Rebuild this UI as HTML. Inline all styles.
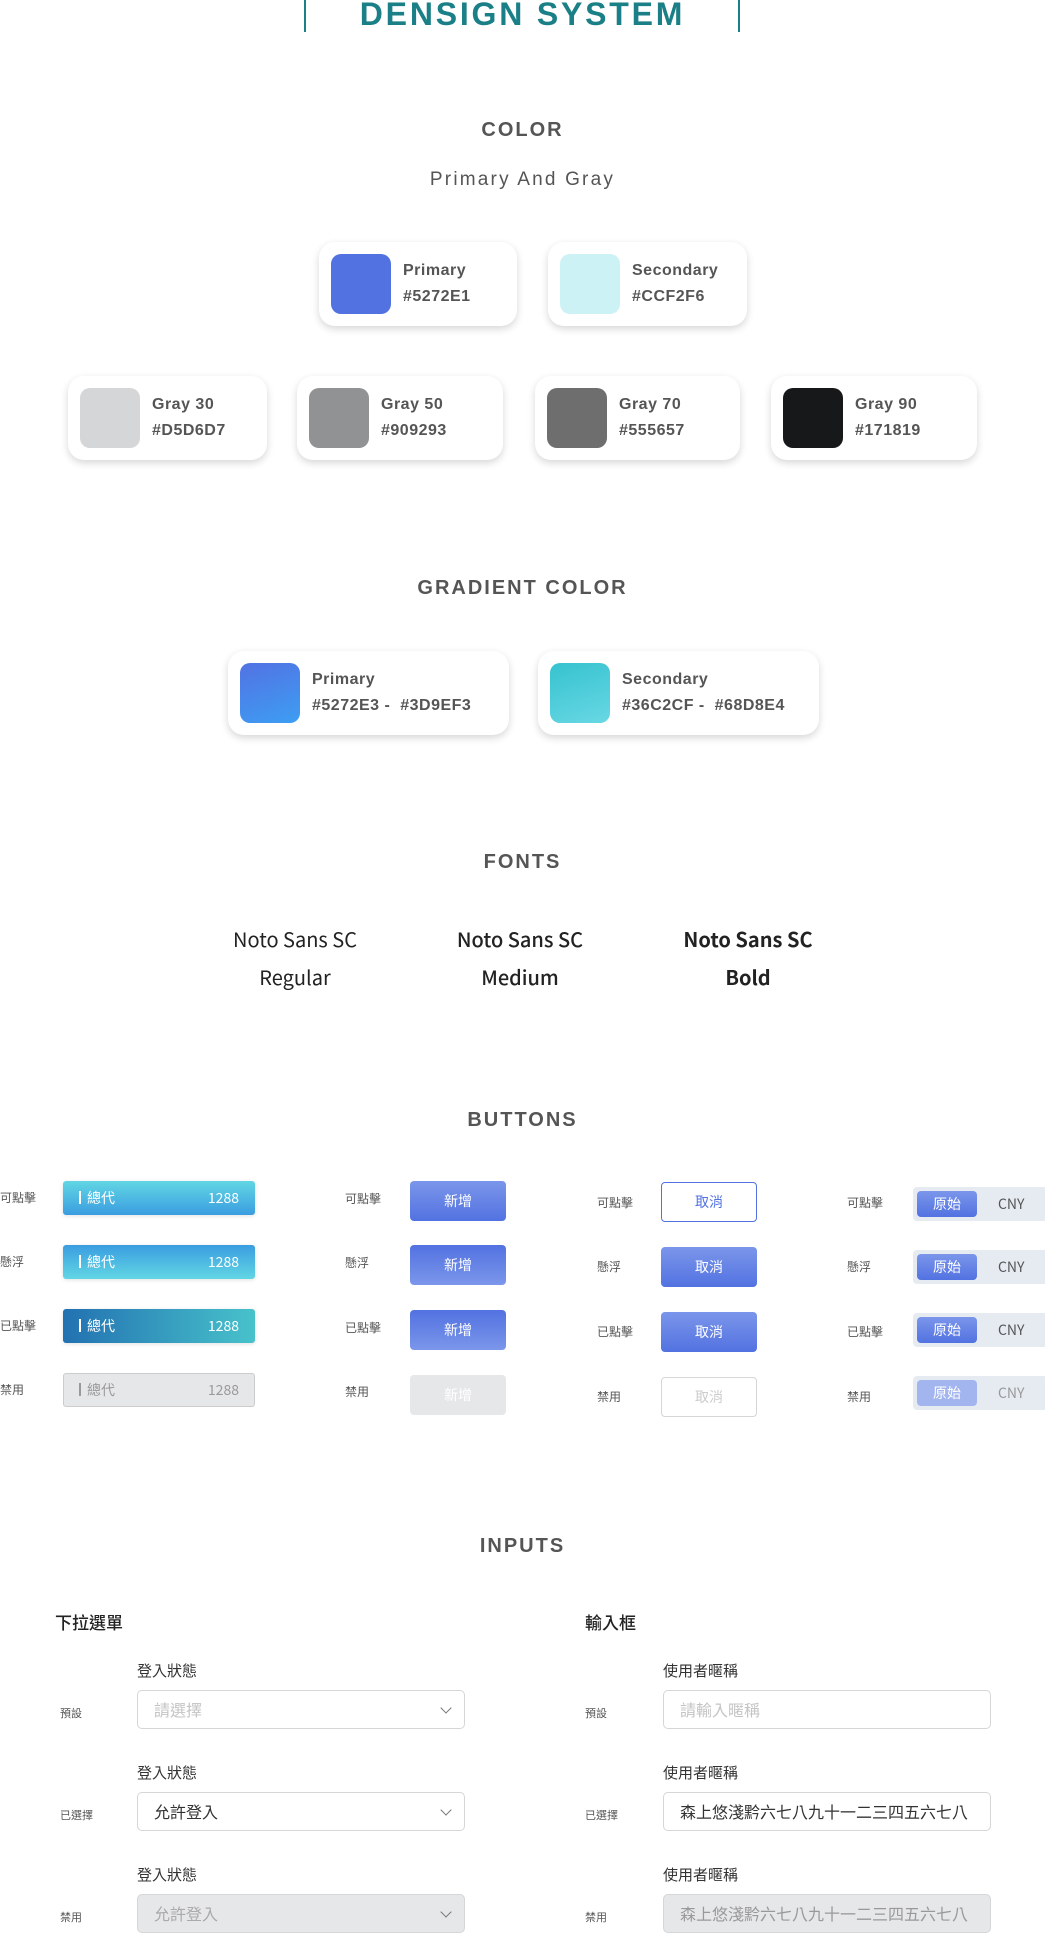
<!DOCTYPE html>
<html><head><meta charset="utf-8"><style>
*{margin:0;padding:0;box-sizing:border-box}
body{width:1045px;height:1934px;background:#fff;position:relative;overflow:hidden;font-family:"Liberation Sans","Noto Sans CJK TC",sans-serif}
.a{position:absolute}
.h{position:absolute;left:0;width:1045px;text-align:center;font-weight:bold;font-size:20px;letter-spacing:2px;color:#555;line-height:24px}
.card{position:absolute;background:#fff;border-radius:16px;box-shadow:0 3px 8px rgba(0,0,0,.16)}
.sw{position:absolute;left:12px;top:12px;width:60px;height:60px;border-radius:10px}
.ct{position:absolute;left:84px;top:16px;font-size:16px;font-weight:bold;color:#555;line-height:26px;letter-spacing:.5px;white-space:nowrap}
.f{position:absolute;width:220px;text-align:center;font-family:"Noto Sans CJK SC",sans-serif;font-size:20px;color:#222;line-height:38px}
.lb{position:absolute;font-size:12px;color:#555;font-family:"Noto Sans CJK TC",sans-serif;line-height:16px}
.bar{position:absolute;left:63px;width:192px;height:34px;border-radius:3px;color:#fff;font-size:14px;font-family:"Noto Sans CJK TC",sans-serif;box-shadow:0 1px 4px rgba(0,0,0,.12)}
.bar .t{position:absolute;left:16px;top:7px;line-height:20px}
.bar .t:before{content:"";display:inline-block;width:2px;height:13px;background:currentColor;margin-right:6px;vertical-align:-1px}
.bar .n{position:absolute;right:16px;top:7px;line-height:20px}
.btn{position:absolute;width:96px;height:40px;border-radius:4px;color:#fff;font-size:14px;text-align:center;line-height:40px;font-family:"Noto Sans CJK TC",sans-serif}
.tg{position:absolute;left:913px;width:135px;height:34px;border-radius:4px;background:#e6ebf2;font-family:"Noto Sans CJK TC",sans-serif;font-size:14px}
.tg .p{position:absolute;left:4px;top:4px;width:60px;height:26px;border-radius:4px;background:linear-gradient(#7b96ea,#5272e1);color:#fff;text-align:center;line-height:26px}
.tg .c{position:absolute;left:85px;top:0;line-height:34px;color:#555}
.il{position:absolute;font-size:15px;color:#333;font-family:"Noto Sans CJK TC",sans-serif;line-height:20px}
.box{position:absolute;width:328px;height:39px;border:1px solid #d5d6d7;border-radius:5px;font-size:16px;font-family:"Noto Sans CJK TC",sans-serif;line-height:37px;padding-left:16px;color:#333}
.chev{position:absolute;right:14px;top:13px;width:8px;height:8px;border-right:1.3px solid #777;border-bottom:1.3px solid #777;transform:rotate(45deg)}
</style></head><body>
<div class="a" style="left:304px;top:0;width:2px;height:32px;background:#1a7f86"></div>
<div class="a" style="left:738px;top:0;width:2px;height:32px;background:#1a7f86"></div>
<div class="a" style="left:0;width:1045px;top:-4px;text-align:center;font-size:32px;font-weight:bold;color:#1a7f86;letter-spacing:2.8px;line-height:36px">DENSIGN SYSTEM</div>

<div class="h" style="top:118px">COLOR</div>
<div class="a" style="left:0;width:1045px;top:168px;text-align:center;font-size:19px;color:#555;letter-spacing:2.2px;line-height:24px">Primary And Gray</div>

<div class="card" style="left:319px;top:242px;width:198px;height:84px"><div class="sw" style="background:#5272e1"></div><div class="ct">Primary<br>#5272E1</div></div>
<div class="card" style="left:548px;top:242px;width:199px;height:84px"><div class="sw" style="background:#ccf2f6"></div><div class="ct">Secondary<br>#CCF2F6</div></div>

<div class="card" style="left:68px;top:376px;width:199px;height:84px"><div class="sw" style="background:#d5d6d7"></div><div class="ct">Gray 30<br>#D5D6D7</div></div>
<div class="card" style="left:297px;top:376px;width:206px;height:84px"><div class="sw" style="background:#909293"></div><div class="ct">Gray 50<br>#909293</div></div>
<div class="card" style="left:535px;top:376px;width:205px;height:84px"><div class="sw" style="background:#6e6e6e"></div><div class="ct">Gray 70<br>#555657</div></div>
<div class="card" style="left:771px;top:376px;width:206px;height:84px"><div class="sw" style="background:#171819"></div><div class="ct">Gray 90<br>#171819</div></div>

<div class="h" style="top:576px">GRADIENT COLOR</div>
<div class="card" style="left:228px;top:651px;width:281px;height:84px"><div class="sw" style="background:linear-gradient(160deg,#5272e3,#3d9ef3)"></div><div class="ct">Primary<br>#5272E3 -&nbsp; #3D9EF3</div></div>
<div class="card" style="left:538px;top:651px;width:281px;height:84px"><div class="sw" style="background:linear-gradient(160deg,#36c2cf,#68d8e4)"></div><div class="ct">Secondary<br>#36C2CF -&nbsp; #68D8E4</div></div>

<div class="h" style="top:850px">FONTS</div>
<div class="f" style="left:185px;top:920px;font-weight:400">Noto Sans SC<br>Regular</div>
<div class="f" style="left:410px;top:920px;font-weight:500">Noto Sans SC<br>Medium</div>
<div class="f" style="left:638px;top:920px;font-weight:700">Noto Sans SC<br>Bold</div>

<div class="h" style="top:1108px">BUTTONS</div>

<div class="lb" style="left:0;top:1190px">可點擊</div>
<div class="lb" style="left:0;top:1254px">懸浮</div>
<div class="lb" style="left:0;top:1318px">已點擊</div>
<div class="lb" style="left:0;top:1382px">禁用</div>
<div class="lb" style="left:345px;top:1191px">可點擊</div>
<div class="lb" style="left:345px;top:1255px">懸浮</div>
<div class="lb" style="left:345px;top:1320px">已點擊</div>
<div class="lb" style="left:345px;top:1384px">禁用</div>
<div class="lb" style="left:597px;top:1195px">可點擊</div>
<div class="lb" style="left:597px;top:1259px">懸浮</div>
<div class="lb" style="left:597px;top:1324px">已點擊</div>
<div class="lb" style="left:597px;top:1389px">禁用</div>
<div class="lb" style="left:847px;top:1195px">可點擊</div>
<div class="lb" style="left:847px;top:1259px">懸浮</div>
<div class="lb" style="left:847px;top:1324px">已點擊</div>
<div class="lb" style="left:847px;top:1389px">禁用</div>

<div class="bar" style="top:1181px;background:linear-gradient(#62d6e4,#3a9de0)"><span class="t">總代</span><span class="n">1288</span></div>
<div class="bar" style="top:1245px;background:linear-gradient(#3a9de0,#62d6e4)"><span class="t">總代</span><span class="n">1288</span></div>
<div class="bar" style="top:1309px;background:linear-gradient(90deg,#2271b1,#48c2cb)"><span class="t">總代</span><span class="n">1288</span></div>
<div class="bar" style="top:1373px;background:#e6e7e9;border:1px solid #ccc;color:#999;box-shadow:none"><span class="t" style="top:6px;left:15px;color:#999">總代</span><span class="n" style="top:6px;right:15px">1288</span></div>

<div class="btn" style="left:410px;top:1181px;background:linear-gradient(#7b96ea,#5272e1)">新增</div>
<div class="btn" style="left:410px;top:1245px;background:linear-gradient(#5272e1,#7b96ea)">新增</div>
<div class="btn" style="left:410px;top:1310px;background:linear-gradient(#5272e1,#7b96ea)">新增</div>
<div class="btn" style="left:410px;top:1375px;background:#e6e7e9">新增</div>

<div class="btn" style="left:661px;top:1182px;background:#fff;border:1px solid #5272e1;color:#5272e1;line-height:38px">取消</div>
<div class="btn" style="left:661px;top:1247px;background:linear-gradient(#7b96ea,#5272e1)">取消</div>
<div class="btn" style="left:661px;top:1312px;background:linear-gradient(#7b96ea,#5272e1)">取消</div>
<div class="btn" style="left:661px;top:1377px;background:#fff;border:1px solid #d5d6d7;color:#ccc;line-height:38px">取消</div>

<div class="tg" style="top:1187px"><div class="p">原始</div><div class="c">CNY</div></div>
<div class="tg" style="top:1250px"><div class="p">原始</div><div class="c">CNY</div></div>
<div class="tg" style="top:1313px"><div class="p">原始</div><div class="c">CNY</div></div>
<div class="tg" style="top:1376px"><div class="p" style="background:#a3b5ef">原始</div><div class="c" style="color:#999">CNY</div></div>

<div class="h" style="top:1534px">INPUTS</div>

<div class="a" style="left:55px;top:1610px;font-size:17px;color:#222;font-family:'Noto Sans CJK TC',sans-serif;font-weight:500;line-height:24px">下拉選單</div>
<div class="a" style="left:585px;top:1610px;font-size:17px;color:#222;font-family:'Noto Sans CJK TC',sans-serif;font-weight:500;line-height:24px">輸入框</div>

<div class="lb" style="left:60px;top:1705px;font-size:11px">預設</div>
<div class="lb" style="left:60px;top:1807px;font-size:11px">已選擇</div>
<div class="lb" style="left:60px;top:1909px;font-size:11px">禁用</div>
<div class="lb" style="left:585px;top:1705px;font-size:11px">預設</div>
<div class="lb" style="left:585px;top:1807px;font-size:11px">已選擇</div>
<div class="lb" style="left:585px;top:1909px;font-size:11px">禁用</div>

<div class="il" style="left:137px;top:1661px">登入狀態</div>
<div class="il" style="left:137px;top:1763px">登入狀態</div>
<div class="il" style="left:137px;top:1865px">登入狀態</div>
<div class="il" style="left:663px;top:1661px">使用者暱稱</div>
<div class="il" style="left:663px;top:1763px">使用者暱稱</div>
<div class="il" style="left:663px;top:1865px">使用者暱稱</div>

<div class="box" style="left:137px;top:1690px;color:#c4c4c4">請選擇<div class="chev"></div></div>
<div class="box" style="left:137px;top:1792px">允許登入<div class="chev"></div></div>
<div class="box" style="left:137px;top:1894px;background:#e6e7e9;color:#aaa">允許登入<div class="chev"></div></div>
<div class="box" style="left:663px;top:1690px;color:#c4c4c4">請輸入暱稱</div>
<div class="box" style="left:663px;top:1792px;white-space:nowrap;overflow:hidden">森上悠淺黔六七八九十一二三四五六七八</div>
<div class="box" style="left:663px;top:1894px;background:#e6e7e9;color:#999;white-space:nowrap;overflow:hidden">森上悠淺黔六七八九十一二三四五六七八</div>
</body></html>
